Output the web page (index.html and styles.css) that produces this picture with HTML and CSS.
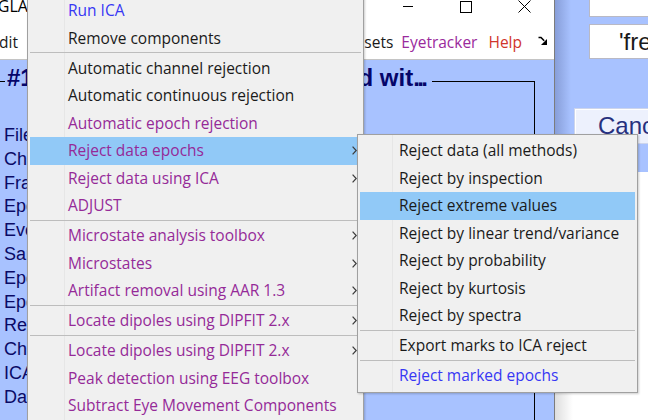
FILE: index.html
```html
<!DOCTYPE html>
<html>
<head>
<meta charset="utf-8">
<title>EEGLAB</title>
<link rel="stylesheet" href="styles.css">
</head>
<body>
<div class="desk">
  <section class="win-left">
    <header class="titlebar">
      <span class="title">EEGLAB v2021.1</span>
      <div class="caps">
        <span class="cap"><svg width="10" height="1" viewBox="0 0 10 1"><rect width="10" height="1" fill="#000"/></svg></span>
        <span class="cap"><svg width="12" height="12" viewBox="0 0 12 12"><rect x="0.5" y="0.5" width="11" height="11" fill="none" stroke="#000"/></svg></span>
        <span class="cap"><svg width="13" height="13" viewBox="0 0 13 13"><path d="M0.5 0.5L12.5 12.5M12.5 0.5L0.5 12.5" stroke="#000" fill="none"/></svg></span>
      </div>
    </header>
    <nav class="menubar">
      <span class="mb mb-edit">Edit</span>
      <span class="mb">Tools</span>
      <span class="mb">Plot</span>
      <span class="mb">Study</span>
      <span class="mb-spacer"></span>
      <span class="mb mb-data">Datasets</span>
      <span class="mb mb-eye">Eyetracker</span>
      <span class="mb mb-help">Help</span>
      <svg class="mb-dock" width="10" height="10" viewBox="0 0 10 10"><path d="M0.5 1.5H3L6.2 4.7" fill="none" stroke="#000" stroke-width="1.6"/><path d="M9 3V9H3Z" fill="#000"/></svg>
    </nav>
    <div class="wbody">
      <div class="frame">
        <div class="frame-head">
          <span class="frame-title"><span>#1:</span><span>EEG data cleaned wit<span class="dots">...</span></span></span>
        </div>
        <ul class="labels">
          <li>Filename</li>
          <li>Channels per frame</li>
          <li>Frames per epoch</li>
          <li>Epochs</li>
          <li>Events</li>
          <li>Sampling rate (Hz)</li>
          <li>Epoch start (sec)</li>
          <li>Epoch end (sec)</li>
          <li>Reference</li>
          <li>Channel locations</li>
          <li>ICA weights</li>
          <li>Dataset size (Mb)</li>
        </ul>
      </div>
    </div>
  </section>
  <aside class="right">
    <div class="rwin">
      <div class="edit e1"></div>
      <div class="edit e2">'freq'</div>
      <div class="btn">Cancel</div>
    </div>
    <div class="below"></div>
  </aside>
</div>

<div class="menu main-menu">
  <div class="item blue">Run ICA</div>
  <div class="item">Remove components</div>
  <div class="sep"></div>
  <div class="item">Automatic channel rejection</div>
  <div class="item">Automatic continuous rejection</div>
  <div class="item purple">Automatic epoch rejection</div>
  <div class="item purple hl">Reject data epochs<svg class="arrow" width="5" height="9" viewBox="0 0 5 9"><path d="M0.6 0.6L4.2 4.5L0.6 8.4" fill="none" stroke="#3a3a3a" stroke-width="1.2"/></svg></div>
  <div class="item purple">Reject data using ICA<svg class="arrow" width="5" height="9" viewBox="0 0 5 9"><path d="M0.6 0.6L4.2 4.5L0.6 8.4" fill="none" stroke="#3a3a3a" stroke-width="1.2"/></svg></div>
  <div class="item purple">ADJUST</div>
  <div class="sep"></div>
  <div class="item purple">Microstate analysis toolbox<svg class="arrow" width="5" height="9" viewBox="0 0 5 9"><path d="M0.6 0.6L4.2 4.5L0.6 8.4" fill="none" stroke="#3a3a3a" stroke-width="1.2"/></svg></div>
  <div class="item purple">Microstates<svg class="arrow" width="5" height="9" viewBox="0 0 5 9"><path d="M0.6 0.6L4.2 4.5L0.6 8.4" fill="none" stroke="#3a3a3a" stroke-width="1.2"/></svg></div>
  <div class="item purple">Artifact removal using AAR 1.3<svg class="arrow" width="5" height="9" viewBox="0 0 5 9"><path d="M0.6 0.6L4.2 4.5L0.6 8.4" fill="none" stroke="#3a3a3a" stroke-width="1.2"/></svg></div>
  <div class="sep"></div>
  <div class="item purple">Locate dipoles using DIPFIT 2.x<svg class="arrow" width="5" height="9" viewBox="0 0 5 9"><path d="M0.6 0.6L4.2 4.5L0.6 8.4" fill="none" stroke="#3a3a3a" stroke-width="1.2"/></svg></div>
  <div class="sep"></div>
  <div class="item purple">Locate dipoles using DIPFIT 2.x<svg class="arrow" width="5" height="9" viewBox="0 0 5 9"><path d="M0.6 0.6L4.2 4.5L0.6 8.4" fill="none" stroke="#3a3a3a" stroke-width="1.2"/></svg></div>
  <div class="item purple">Peak detection using EEG toolbox</div>
  <div class="item purple">Subtract Eye Movement Components</div>
</div>

<div class="menu sub-menu">
  <div class="item">Reject data (all methods)</div>
  <div class="item">Reject by inspection</div>
  <div class="item hl">Reject extreme values</div>
  <div class="item">Reject by linear trend/variance</div>
  <div class="item">Reject by probability</div>
  <div class="item">Reject by kurtosis</div>
  <div class="item">Reject by spectra</div>
  <div class="sep"></div>
  <div class="item">Export marks to ICA reject</div>
  <div class="sep"></div>
  <div class="item blue">Reject marked epochs</div>
</div>
</body>
</html>
```

FILE: styles.css
```css
* { box-sizing: border-box; }

html, body {
  margin: 0;
  padding: 0;
}

body {
  width: 648px;
  height: 420px;
  overflow: hidden;
  position: relative;
  background: #ffffff;
  font-family: "Open Sans", "Noto Sans", sans-serif;
  color: #1a1a1a;
}

.desk {
  display: grid;
  grid-template-columns: 555px 93px;
  height: 420px;
}

/* ---------- left (EEGLAB) window ---------- */
.win-left {
  display: flex;
  flex-direction: column;
  background: #a8c2ff;
  border-right: 1px solid #7c7c7c;
  height: 420px;
  overflow: hidden;
}

.titlebar {
  height: 27px;
  flex: none;
  background: #ffffff;
  display: flex;
  align-items: flex-start;
}

.title {
  margin-left: -20px;
  font-size: 16px;
  line-height: 16px;
  margin-top: -2px;
  color: #000;
  white-space: nowrap;
}

.caps {
  margin-left: auto;
  margin-right: 1px;
  display: flex;
}

.cap {
  width: 58px;
  height: 13px;
  display: flex;
  align-items: center;
  justify-content: center;
}

.cap svg { display: block; }

.menubar {
  height: 33px;
  flex: none;
  background: #ffffff;
  border-bottom: 1px solid #c4c4c4;
  display: flex;
  align-items: center;
  font-size: 15.5px;
  white-space: nowrap;
  padding-bottom: 2px;
}

.mb { color: #1a1a1a; margin-right: 12px; }
.mb-edit { margin-left: -9.5px; }
.mb-spacer { flex: 1; }
.mb-data { margin-right: 8px; }
.mb-eye { color: #9a2a9c; margin-right: 11px; }
.mb-help { color: #d0352c; margin-right: 16px; }
.mb-dock { display: block; margin-right: 6px; margin-top: -2px; }

.wbody {
  flex: 1;
  display: flex;
  flex-direction: column;
}

.frame {
  margin: 21px 19px 0 -20px;
  flex: 1;
  border-top: 1px solid #000;
  border-right: 1px solid #000;
}

.frame-head {
  margin-top: -16px;
  height: 24px;
  display: flex;
}

.frame-title {
  margin-left: 25px;
  width: 427px;
  padding: 0 4px 0 2px;
  display: flex;
  justify-content: space-between;
  background: #a8c2ff;
  font-family: "Liberation Sans", Arial, sans-serif;
  font-weight: bold;
  font-size: 24px;
  line-height: 24px;
  color: #05056a;
  white-space: nowrap;
}

.dots { letter-spacing: -2.6px; margin-right: 2.6px; }

.labels {
  list-style: none;
  margin: 34px 0 0 0;
  padding: 0 0 0 24px;
  font-family: "Liberation Sans", Arial, sans-serif;
  font-size: 18px;
  line-height: 23.8px;
  color: #0a0a66;
  white-space: nowrap;
}

/* ---------- right window ---------- */
.right {
  display: flex;
  flex-direction: column;
}

.rwin {
  height: 172px;
  flex: none;
  background: linear-gradient(to right, rgba(20, 30, 80, 0.22), rgba(20, 30, 80, 0) 16px), #a8c2ff;
  padding-left: 34px;
  display: flex;
  flex-direction: column;
  overflow: hidden;
}

.edit {
  background: #ffffff;
  border: 1px solid #b9b9c4;
  height: 35px;
  width: 80px;
  font-family: "Liberation Sans", Arial, sans-serif;
  font-size: 24px;
  line-height: 33px;
  color: #1a1a1a;
  white-space: nowrap;
  flex: none;
}

.e1 { margin-top: -18px; }
.e2 { margin-top: 7px; padding-left: 29px; }

.btn {
  margin-top: 49px;
  margin-left: -15px;
  width: 100px;
  height: 36px;
  flex: none;
  background: #edf1fd;
  border: 1px solid #cdd5ec;
  box-shadow: inset 1px 1px 0 #ffffff;
  padding-left: 23px;
  font-family: "Liberation Sans", Arial, sans-serif;
  font-size: 24px;
  line-height: 33px;
  color: #26307e;
  white-space: nowrap;
}

.below {
  flex: 1;
  background: linear-gradient(to right, rgba(0, 0, 0, 0.13), rgba(0, 0, 0, 0) 18px), #ffffff;
}

/* ---------- popup menus ---------- */
.menu {
  position: absolute;
  background-color: #f0f0f0;
  border: 1px solid #a0a0a0;
  padding: 2px;
  font-size: 15.5px;
  box-shadow: 1px 1px 2px rgba(0, 0, 0, 0.2);
}

.main-menu {
  left: 27px;
  top: -6px;
  width: 337px;
  background-image: linear-gradient(#e6e6e6, #e6e6e6);
  background-size: 1px 100%;
  background-position: 36px 0;
  background-repeat: no-repeat;
}

.sub-menu {
  left: 357px;
  top: 134px;
  width: 281px;
  background-image: linear-gradient(#e6e6e6, #e6e6e6);
  background-size: 1px 100%;
  background-position: 34px 0;
  background-repeat: no-repeat;
}

.item {
  height: 27.5px;
  line-height: 27.5px;
  padding-left: 38px;
  padding-right: 4px;
  display: flex;
  align-items: center;
  white-space: nowrap;
  color: #1a1a1a;
}

.sub-menu .item { padding-left: 39px; }

.item.hl { background: #91c9f7; }
.item.blue { color: #3737f4; }
.item.purple { color: #952a98; }

.arrow {
  display: block;
  margin-left: auto;
}

.sep {
  height: 2.5px;
  border-top: 1px solid #bdbdbd;
}
```
